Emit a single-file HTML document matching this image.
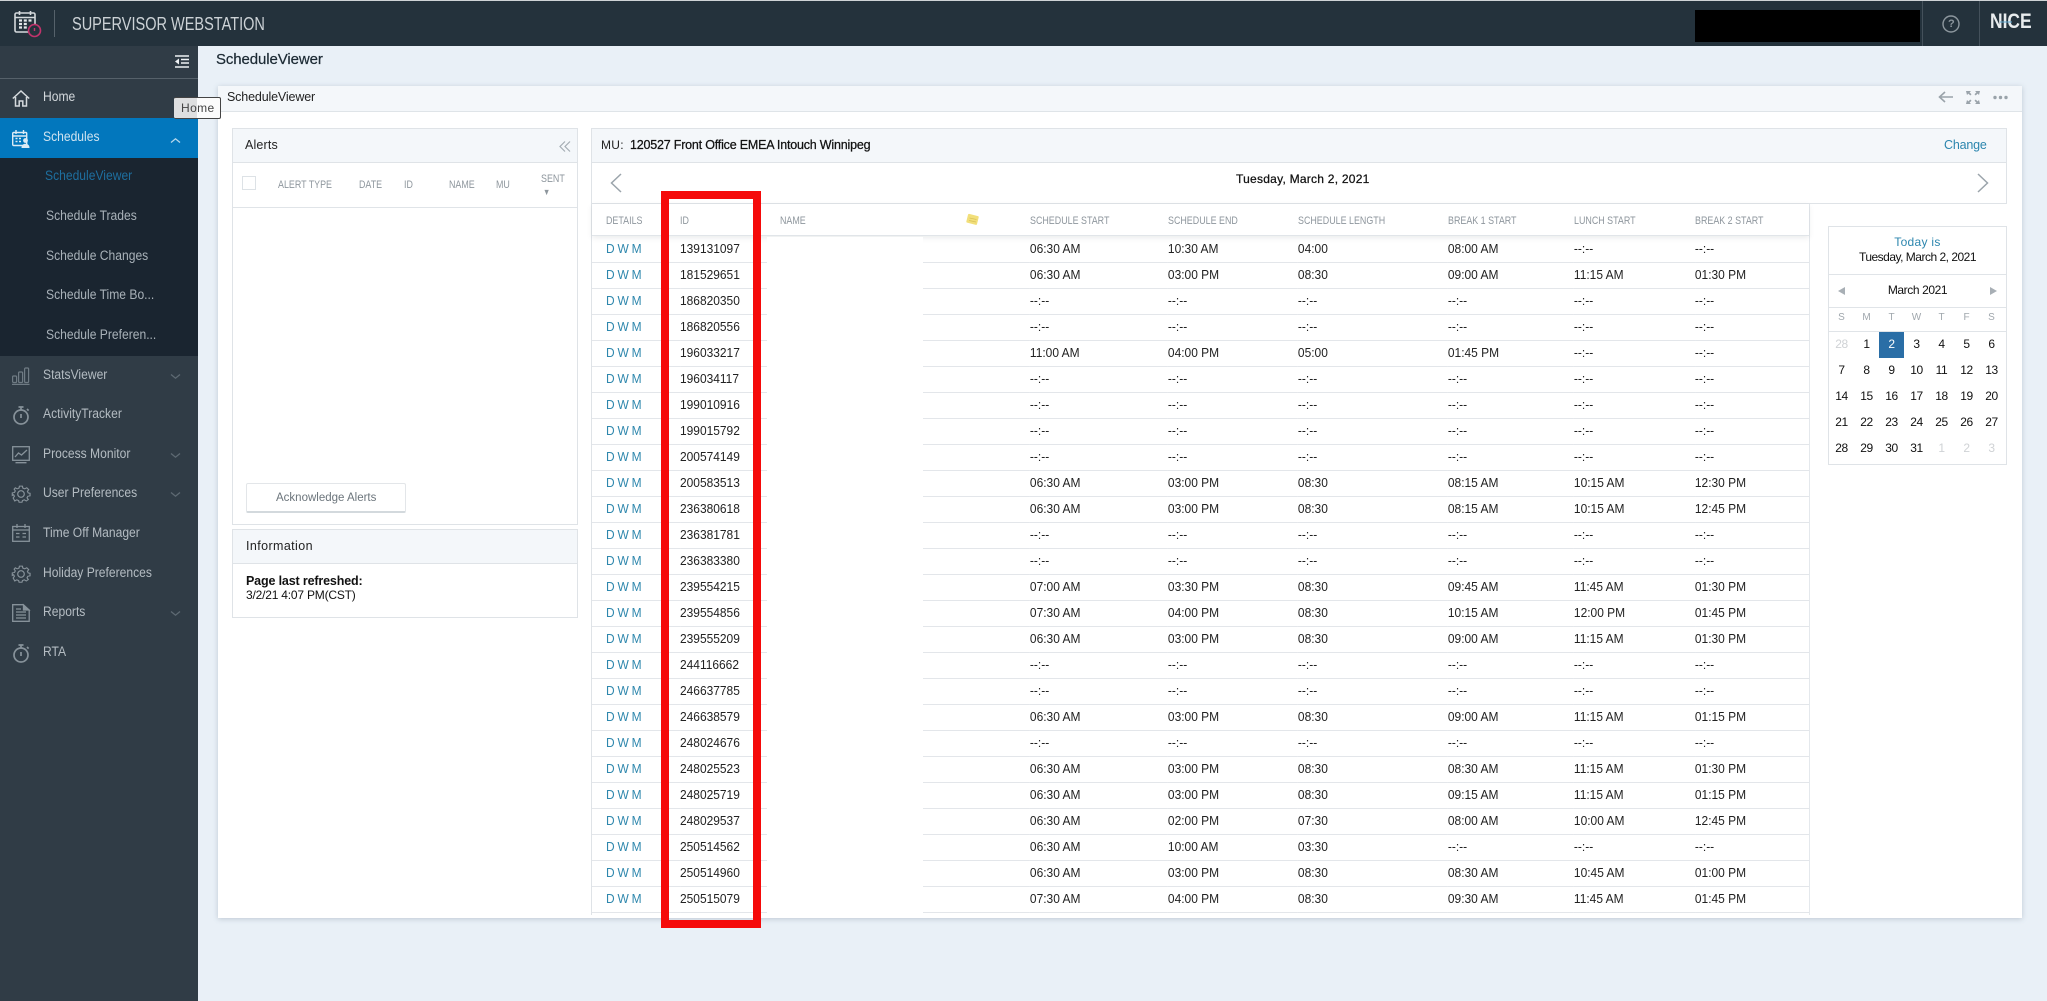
<!DOCTYPE html>
<html><head><meta charset="utf-8"><title>Supervisor Webstation</title>
<style>
html,body{margin:0;padding:0;width:2047px;height:1001px;overflow:hidden;background:#e9f0f7;font-family:"Liberation Sans",sans-serif;color:#1b1b1b}
*{box-sizing:border-box}
.a{position:absolute}
.t{position:absolute;white-space:nowrap;line-height:16px;transform:translateY(-8px)}
#top{left:0;top:1px;width:2047px;height:45px;background:#24323c}
#side{left:0;top:46px;width:198px;height:955px;background:#303c46}
.nav,.sub{font-size:13.5px;transform:translateY(-8px) scaleX(.896);transform-origin:0 50%}
.nav{color:#b4bcc2;left:43px}
.sub{color:#a9b2b9;left:46px}
.hd{font-size:11px;color:#8e969d;transform:translateY(-8px) scaleX(.81);transform-origin:0 50%}
svg{position:absolute;overflow:visible}
.ln{position:absolute;background:#e0e4e8}
table{border-collapse:collapse;table-layout:fixed;position:absolute;left:592px;top:236px;width:1322.8px;font-size:13px;transform:scaleX(.92);transform-origin:0 0}
td{height:26px;padding:0;border-bottom:1px solid #e3e6ea;white-space:nowrap;vertical-align:middle;line-height:14px;color:#222}
td:first-child{padding-left:15.2px;color:#2e87ad;word-spacing:-.5px}
.cal{position:absolute;width:25px;text-align:center;font-size:12px;line-height:16px;letter-spacing:-.4px;transform:translateY(-8px);color:#111}
.dw{color:#a0a7ad;font-size:10px;letter-spacing:0}
.ot{color:#cfd2d5}
</style></head><body>

<div class="a" id="top"></div>
<div class="a" style="left:0;top:0;width:2047px;height:1px;background:#cfd3d6"></div>
<svg style="left:14px;top:10px" width="28" height="28" viewBox="0 0 28 28" fill="none">
<rect x="1" y="3" width="20" height="19" rx="1.5" stroke="#d5dadd" stroke-width="1.6"/>
<path d="M1 7.5h20M5.5 1v4M16.5 1v4" stroke="#d5dadd" stroke-width="1.6"/>
<path d="M5 10.5h3M9.8 10.5h3M14.5 10.5h3M5 14h3M9.8 14h3M5 17.5h3M9.8 17.5h3" stroke="#e4e8ea" stroke-width="2.2"/>
<circle cx="20.5" cy="20.5" r="6" fill="#24323c" stroke="#c2336c" stroke-width="1.6"/>
<path d="M20.5 18v3" stroke="#c2336c" stroke-width="1.4"/>
</svg>
<div class="a" style="left:54px;top:10px;width:1px;height:27px;background:#56626b"></div>
<div class="t" style="left:72px;top:24px;font-size:18px;color:#ccd2d6;line-height:20px;transform:translateY(-10px) scaleX(.807);transform-origin:0 50%">SUPERVISOR WEBSTATION</div>
<div class="a" style="left:1695px;top:10px;width:225px;height:32px;background:#000"></div>
<div class="a" style="left:1922px;top:1px;width:1px;height:45px;background:#44515b"></div>
<div class="a" style="left:1979px;top:1px;width:1px;height:45px;background:#44515b"></div>
<svg style="left:1942px;top:15px" width="18" height="18" fill="none"><circle cx="9" cy="9" r="8" stroke="#8d979e" stroke-width="1.4"/></svg>
<div class="t" style="left:1948px;top:24px;font-size:11px;font-weight:bold;color:#8d979e">?</div>
<div class="t" style="left:1990px;top:22px;font-size:21px;font-weight:bold;color:#e8ecee;line-height:20px;transform:translateY(-10px) scaleX(.83);transform-origin:0 50%">NICE</div>
<svg style="left:2000px;top:17px" width="12" height="10" fill="none" stroke="#5da6cf" stroke-width="1"><path d="M0 5h12"/></svg>

<div class="a" id="side"></div>
<div class="a" style="left:0;top:78px;width:198px;height:1px;background:#56616a"></div>
<svg style="left:175px;top:55px" width="15" height="13" fill="none" stroke="#eef1f3" stroke-width="1.6"><path d="M0 1h14M6 4.5h8M6 8h8M0 12h14"/><path d="M4 3.5v6L0 6.5z" fill="#eef1f3" stroke="none"/></svg>

<div class="a" style="left:0;top:118px;width:198px;height:40px;background:#0277bd"></div>
<div class="a" style="left:0;top:158px;width:198px;height:198px;background:#1a2530"></div>

<svg style="left:12px;top:90px" width="18" height="17" fill="none" stroke="#d5dadd" stroke-width="1.5"><path d="M.8 8.5 9 1l8.2 7.5M3.5 7v9h3.7v-5h3.6v5h3.7V7"/></svg>
<div class="t nav" style="top:97px;color:#d3d8dc">Home</div>
<svg style="left:12px;top:130px" width="19" height="18" fill="none" stroke="#dcebf5" stroke-width="1.4"><rect x=".7" y="2.5" width="14" height="13" rx="1"/><path d="M.7 6h14M4 0v4M11.5 0v4"/><path d="M3.5 8.5h2M7 8.5h2M3.5 11.5h2M7 11.5h2" stroke-width="1.6"/><circle cx="13.5" cy="10.5" r="2.4" fill="#dcebf5" stroke="none"/><path d="M9.5 18c0-3 2-4.2 4-4.2s4 1.2 4 4.2z" fill="#dcebf5" stroke="none"/></svg>
<div class="t nav" style="top:137px;color:#cfe3f0">Schedules</div>
<svg style="left:171px;top:138px" width="9" height="5" fill="none" stroke="#b8d8ec" stroke-width="1.3"><path d="M0 4.5L4.5 .8 9 4.5"/></svg>

<div class="t sub" style="left:45px;top:176px;color:#1e6f9f">ScheduleViewer</div>
<div class="t sub" style="top:216px">Schedule Trades</div>
<div class="t sub" style="top:256px">Schedule Changes</div>
<div class="t sub" style="top:295px">Schedule Time Bo...</div>
<div class="t sub" style="top:335px">Schedule Preferen...</div>

<svg style="left:12px;top:367px" width="18" height="18" fill="none" stroke="#6f7b84" stroke-width="1.2"><rect x=".6" y="9" width="4" height="6.5" rx="1"/><rect x="6.6" y="5" width="4" height="10.5" rx="1"/><rect x="12.6" y="1" width="4" height="14.5" rx="1"/><path d="M0 17.4h17.5"/></svg>
<div class="t nav" style="top:375px">StatsViewer</div>
<svg style="left:13px;top:406px" width="17" height="19" fill="none" stroke="#87929a" stroke-width="1.7"><circle cx="8" cy="11" r="7"/><path d="M5.5 1h5M8 1v3M14 3l1.6 1.6M8 8v4" /></svg>
<div class="t nav" style="top:414px">ActivityTracker</div>
<svg style="left:12px;top:446px" width="18" height="18" fill="none" stroke="#87929a" stroke-width="1.3"><rect x=".7" y=".7" width="16.6" height="13.6"/><path d="M3 11l3.5-4 3 2L15 4M3.5 16.7h11" /></svg>
<div class="t nav" style="top:454px">Process Monitor</div>
<svg style="left:12px;top:485px" width="18" height="18" viewBox="0 0 18 18" fill="none" stroke="#87929a" stroke-width="1.2"><circle cx="9" cy="9" r="3.3"/><path d="M7.5 1h3l.5 2.4 1.9.8L15 3l2 2.1-1.3 2 .8 1.9 1.9.5v3l-2.3.5-.8 1.8 1.3 2-2.1 1.7-2-1.3-1.9.8-.5 2h-3l-.5-2-1.9-.8-2 1.3L1 15l1.3-2-.8-1.8L.1 12V9l2.3-.5.8-1.9L2 4.6 3.2 3l1.9 1.2L7 3.4z" transform="scale(.97 .85) translate(.2 .3)"/></svg>
<div class="t nav" style="top:493px">User Preferences</div>
<svg style="left:12px;top:524px" width="18" height="18" fill="none" stroke="#87929a" stroke-width="1.3"><rect x=".7" y="2.5" width="16.6" height="14.8"/><path d="M.7 6h16.6M5 0v4M13 0v4M4 9.5h3.5M10.5 9.5h3.5M4 13h3.5M10.5 13h3.5"/></svg>
<div class="t nav" style="top:533px">Time Off Manager</div>
<svg style="left:12px;top:565px" width="18" height="18" viewBox="0 0 18 18" fill="none" stroke="#87929a" stroke-width="1.2"><circle cx="9" cy="9" r="3.3"/><path d="M7.5 1h3l.5 2.4 1.9.8L15 3l2 2.1-1.3 2 .8 1.9 1.9.5v3l-2.3.5-.8 1.8 1.3 2-2.1 1.7-2-1.3-1.9.8-.5 2h-3l-.5-2-1.9-.8-2 1.3L1 15l1.3-2-.8-1.8L.1 12V9l2.3-.5.8-1.9L2 4.6 3.2 3l1.9 1.2L7 3.4z" transform="scale(.97 .85) translate(.2 .3)"/></svg>
<div class="t nav" style="top:573px">Holiday Preferences</div>
<svg style="left:12px;top:604px" width="18" height="18" fill="none" stroke="#87929a" stroke-width="1.3"><path d="M.7.7h10.5l6 5.5v11.1H.7z"/><path d="M4 8h10M4 11h10M4 14h10M4 5h5" /><path d="M11.5 1v5h5.5z" fill="#87929a"/></svg>
<div class="t nav" style="top:612px">Reports</div>
<svg style="left:13px;top:644px" width="17" height="19" fill="none" stroke="#87929a" stroke-width="1.7"><circle cx="8" cy="11" r="7"/><path d="M5.5 1h5M8 1v3M14 3l1.6 1.6M8 8v4" /></svg>
<div class="t nav" style="top:652px">RTA</div>
<svg style="left:171px;top:374px" width="9" height="5" fill="none" stroke="#5e6a73" stroke-width="1.3"><path d="M0 .5L4.5 4.2 9 .5"/></svg>
<svg style="left:171px;top:453px" width="9" height="5" fill="none" stroke="#5e6a73" stroke-width="1.3"><path d="M0 .5L4.5 4.2 9 .5"/></svg>
<svg style="left:171px;top:492px" width="9" height="5" fill="none" stroke="#5e6a73" stroke-width="1.3"><path d="M0 .5L4.5 4.2 9 .5"/></svg>
<svg style="left:171px;top:611px" width="9" height="5" fill="none" stroke="#5e6a73" stroke-width="1.3"><path d="M0 .5L4.5 4.2 9 .5"/></svg>

<div class="t" style="left:216px;top:60px;font-size:15px;letter-spacing:-.1px;color:#1c2a34;-webkit-text-stroke:.2px #1c2a34">ScheduleViewer</div>

<!-- main panel -->
<div class="a" style="left:218px;top:86px;width:1804px;height:832px;background:#fff;box-shadow:0 1px 5px rgba(90,110,130,.3)"></div>
<div class="a" style="left:218px;top:86px;width:1804px;height:26px;background:#f4f7fa;border-bottom:1px solid #dfe4e8"></div>
<div class="t" style="left:227px;top:97px;font-size:12.5px;letter-spacing:-.15px;color:#222">ScheduleViewer</div>
<svg style="left:1938px;top:91px" width="16" height="12" fill="none" stroke="#9aa3aa" stroke-width="1.6"><path d="M15 6H2M7 1L1.5 6 7 11"/></svg>
<svg style="left:1966px;top:91px" width="14" height="13" fill="#9aa3aa"><path d="M0 0h5L3.6 1.4 5.5 3.3 4.3 4.5 2.4 2.6 1 4zM14 0H9l1.4 1.4-1.9 1.9 1.2 1.2 1.9-1.9L13 4zM0 13H5L3.6 11.6 5.5 9.7 4.3 8.5 2.4 10.4 1 9zM14 13H9l1.4-1.4-1.9-1.9 1.2-1.2 1.9 1.9L13 9z"/></svg>
<svg style="left:1993px;top:95px" width="15" height="5" fill="#9aa3aa"><circle cx="2" cy="2.5" r="1.7"/><circle cx="7.5" cy="2.5" r="1.7"/><circle cx="13" cy="2.5" r="1.7"/></svg>

<!-- Home tooltip -->
<div class="a" style="left:174px;top:97px;width:47px;height:22px;border:1px solid #444;border-left:0;border-radius:2px;background:linear-gradient(90deg,#dedfe0 0,#dedfe0 23px,#fbfbfb 23px)"></div>
<div class="t" style="left:181px;top:108px;font-size:12px;letter-spacing:.4px;color:#444">Home</div>

<!-- Alerts -->
<div class="a" style="left:232px;top:128px;width:346px;height:397px;border:1px solid #dfe3e7"></div>
<div class="a" style="left:233px;top:129px;width:344px;height:34px;background:#f4f7fa;border-bottom:1px solid #dfe3e7"></div>
<div class="t" style="left:245px;top:145px;font-size:12.5px;letter-spacing:.15px;color:#222">Alerts</div>
<svg style="left:559px;top:141px" width="12" height="11" fill="none" stroke="#a4adb4" stroke-width="1.2"><path d="M6 .5L1 5.5l5 5M11 .5L6 5.5l5 5"/></svg>
<div class="ln" style="left:233px;top:207px;width:344px;height:1px"></div>
<div class="a" style="left:242px;top:176px;width:14px;height:14px;border:1px solid #dde2e6"></div>
<div class="t hd" style="left:278px;top:185px">ALERT TYPE</div>
<div class="t hd" style="left:359px;top:185px">DATE</div>
<div class="t hd" style="left:404px;top:185px">ID</div>
<div class="t hd" style="left:449px;top:185px">NAME</div>
<div class="t hd" style="left:496px;top:185px">MU</div>
<div class="t hd" style="left:541px;top:179px">SENT</div>
<div class="t hd" style="left:543px;top:192px;font-size:9px">▼</div>
<div class="a" style="left:246px;top:483px;width:160px;height:30px;background:#fff;border:1px solid #e3e6e9;border-bottom:2px solid #d3d9dd;border-radius:2px"></div>
<div class="t" style="left:276px;top:498px;font-size:11.5px;color:#6c757c">Acknowledge Alerts</div>

<!-- Information -->
<div class="a" style="left:232px;top:529px;width:346px;height:89px;border:1px solid #dfe3e7"></div>
<div class="a" style="left:233px;top:530px;width:344px;height:34px;background:#f4f7fa;border-bottom:1px solid #dfe3e7"></div>
<div class="t" style="left:246px;top:546px;font-size:12.5px;letter-spacing:.4px;color:#222">Information</div>
<div class="t" style="left:246px;top:581px;font-size:12.5px;font-weight:bold;color:#111;letter-spacing:-.15px">Page last refreshed:</div>
<div class="t" style="left:246px;top:595px;font-size:12px;letter-spacing:-.2px;color:#111">3/2/21 4:07 PM(CST)</div>

<!-- MU panel -->
<div class="a" style="left:591px;top:128px;width:1416px;height:76px;border:1px solid #dfe3e7"></div>
<div class="a" style="left:592px;top:129px;width:1414px;height:34px;background:#f4f7fa;border-bottom:1px solid #dfe3e7"></div>
<div class="t" style="left:601px;top:145px;font-size:12px;letter-spacing:.3px;color:#222">MU:</div>
<div class="t" style="left:630px;top:145px;font-size:12.5px;letter-spacing:-.2px;color:#111;-webkit-text-stroke:.25px #111">120527 Front Office EMEA Intouch Winnipeg</div>
<div class="t" style="left:1944px;top:145px;font-size:12.5px;letter-spacing:-.2px;color:#2c86ae">Change</div>
<svg style="left:610px;top:173px" width="12" height="20" fill="none" stroke="#9ba4ab" stroke-width="1.5"><path d="M11 1L1.5 10 11 19"/></svg>
<svg style="left:1977px;top:173px" width="12" height="20" fill="none" stroke="#9ba4ab" stroke-width="1.5"><path d="M1 1l9.5 9L1 19"/></svg>
<div class="t" style="left:1236px;top:179px;font-size:12px;letter-spacing:.25px;color:#111;-webkit-text-stroke:.25px #111">Tuesday, March 2, 2021</div>

<!-- table -->
<div class="a" style="left:591px;top:204px;width:1px;height:711px;background:#dfe3e7"></div>
<div class="a" style="left:1809px;top:204px;width:1px;height:711px;background:#e4e8ec"></div>
<div class="a" style="left:592px;top:204px;width:1217px;height:32px;background:#fff;border-bottom:1px solid #e1e5e9;box-shadow:0 2px 5px rgba(90,100,110,.12)"></div>
<div class="t hd" style="left:606px;top:221px">DETAILS</div>
<div class="t hd" style="left:680px;top:221px">ID</div>
<div class="t hd" style="left:780px;top:221px">NAME</div>
<svg style="left:966px;top:213px" width="14" height="13"><rect x="1" y="2" width="11" height="9" rx="1" fill="#f2df7a" transform="rotate(14 7 6.5)"/><path d="M3.5 5l7 1.5M3 7.5l7 1.5" stroke="#d8c25a" stroke-width=".8"/></svg>
<div class="t hd" style="left:1030px;top:221px">SCHEDULE START</div>
<div class="t hd" style="left:1168px;top:221px">SCHEDULE END</div>
<div class="t hd" style="left:1298px;top:221px">SCHEDULE LENGTH</div>
<div class="t hd" style="left:1448px;top:221px">BREAK 1 START</div>
<div class="t hd" style="left:1574px;top:221px">LUNCH START</div>
<div class="t hd" style="left:1695px;top:221px">BREAK 2 START</div>

<table>
<colgroup><col style="width:95.65px"><col style="width:108.7px"><col style="width:271.7px"><col style="width:150px"><col style="width:141.3px"><col style="width:163px"><col style="width:137px"><col style="width:131.5px"><col style="width:123.95px"></colgroup>
<tr><td>D W M</td><td>139131097</td><td></td><td>06:30 AM</td><td>10:30 AM</td><td>04:00</td><td>08:00 AM</td><td>--:--</td><td>--:--</td></tr>
<tr><td>D W M</td><td>181529651</td><td></td><td>06:30 AM</td><td>03:00 PM</td><td>08:30</td><td>09:00 AM</td><td>11:15 AM</td><td>01:30 PM</td></tr>
<tr><td>D W M</td><td>186820350</td><td></td><td>--:--</td><td>--:--</td><td>--:--</td><td>--:--</td><td>--:--</td><td>--:--</td></tr>
<tr><td>D W M</td><td>186820556</td><td></td><td>--:--</td><td>--:--</td><td>--:--</td><td>--:--</td><td>--:--</td><td>--:--</td></tr>
<tr><td>D W M</td><td>196033217</td><td></td><td>11:00 AM</td><td>04:00 PM</td><td>05:00</td><td>01:45 PM</td><td>--:--</td><td>--:--</td></tr>
<tr><td>D W M</td><td>196034117</td><td></td><td>--:--</td><td>--:--</td><td>--:--</td><td>--:--</td><td>--:--</td><td>--:--</td></tr>
<tr><td>D W M</td><td>199010916</td><td></td><td>--:--</td><td>--:--</td><td>--:--</td><td>--:--</td><td>--:--</td><td>--:--</td></tr>
<tr><td>D W M</td><td>199015792</td><td></td><td>--:--</td><td>--:--</td><td>--:--</td><td>--:--</td><td>--:--</td><td>--:--</td></tr>
<tr><td>D W M</td><td>200574149</td><td></td><td>--:--</td><td>--:--</td><td>--:--</td><td>--:--</td><td>--:--</td><td>--:--</td></tr>
<tr><td>D W M</td><td>200583513</td><td></td><td>06:30 AM</td><td>03:00 PM</td><td>08:30</td><td>08:15 AM</td><td>10:15 AM</td><td>12:30 PM</td></tr>
<tr><td>D W M</td><td>236380618</td><td></td><td>06:30 AM</td><td>03:00 PM</td><td>08:30</td><td>08:15 AM</td><td>10:15 AM</td><td>12:45 PM</td></tr>
<tr><td>D W M</td><td>236381781</td><td></td><td>--:--</td><td>--:--</td><td>--:--</td><td>--:--</td><td>--:--</td><td>--:--</td></tr>
<tr><td>D W M</td><td>236383380</td><td></td><td>--:--</td><td>--:--</td><td>--:--</td><td>--:--</td><td>--:--</td><td>--:--</td></tr>
<tr><td>D W M</td><td>239554215</td><td></td><td>07:00 AM</td><td>03:30 PM</td><td>08:30</td><td>09:45 AM</td><td>11:45 AM</td><td>01:30 PM</td></tr>
<tr><td>D W M</td><td>239554856</td><td></td><td>07:30 AM</td><td>04:00 PM</td><td>08:30</td><td>10:15 AM</td><td>12:00 PM</td><td>01:45 PM</td></tr>
<tr><td>D W M</td><td>239555209</td><td></td><td>06:30 AM</td><td>03:00 PM</td><td>08:30</td><td>09:00 AM</td><td>11:15 AM</td><td>01:30 PM</td></tr>
<tr><td>D W M</td><td>244116662</td><td></td><td>--:--</td><td>--:--</td><td>--:--</td><td>--:--</td><td>--:--</td><td>--:--</td></tr>
<tr><td>D W M</td><td>246637785</td><td></td><td>--:--</td><td>--:--</td><td>--:--</td><td>--:--</td><td>--:--</td><td>--:--</td></tr>
<tr><td>D W M</td><td>246638579</td><td></td><td>06:30 AM</td><td>03:00 PM</td><td>08:30</td><td>09:00 AM</td><td>11:15 AM</td><td>01:15 PM</td></tr>
<tr><td>D W M</td><td>248024676</td><td></td><td>--:--</td><td>--:--</td><td>--:--</td><td>--:--</td><td>--:--</td><td>--:--</td></tr>
<tr><td>D W M</td><td>248025523</td><td></td><td>06:30 AM</td><td>03:00 PM</td><td>08:30</td><td>08:30 AM</td><td>11:15 AM</td><td>01:30 PM</td></tr>
<tr><td>D W M</td><td>248025719</td><td></td><td>06:30 AM</td><td>03:00 PM</td><td>08:30</td><td>09:15 AM</td><td>11:15 AM</td><td>01:15 PM</td></tr>
<tr><td>D W M</td><td>248029537</td><td></td><td>06:30 AM</td><td>02:00 PM</td><td>07:30</td><td>08:00 AM</td><td>10:00 AM</td><td>12:45 PM</td></tr>
<tr><td>D W M</td><td>250514562</td><td></td><td>06:30 AM</td><td>10:00 AM</td><td>03:30</td><td>--:--</td><td>--:--</td><td>--:--</td></tr>
<tr><td>D W M</td><td>250514960</td><td></td><td>06:30 AM</td><td>03:00 PM</td><td>08:30</td><td>08:30 AM</td><td>10:45 AM</td><td>01:00 PM</td></tr>
<tr><td>D W M</td><td>250515079</td><td></td><td>07:30 AM</td><td>04:00 PM</td><td>08:30</td><td>09:30 AM</td><td>11:45 AM</td><td>01:45 PM</td></tr>
</table>
<div class="a" style="left:767px;top:237px;width:156px;height:681px;background:#fff"></div>

<!-- red box -->
<div class="a" style="left:661px;top:191px;width:100px;height:737px;border:8px solid #f50a0a"></div>

<!-- calendar -->
<div class="a" style="left:1828px;top:226px;width:179px;height:239px;border:1px solid #dfe3e7;background:#fff"></div>
<div class="ln" style="left:1829px;top:274px;width:177px;height:1px"></div>
<div class="ln" style="left:1829px;top:307px;width:177px;height:1px"></div>
<div class="ln" style="left:1829px;top:331px;width:177px;height:1px"></div>
<div class="t" style="left:1829px;width:177px;text-align:center;top:242px;font-size:12px;letter-spacing:.3px;color:#2c86ae">Today is</div>
<div class="t" style="left:1829px;width:177px;text-align:center;top:257px;font-size:12px;letter-spacing:-.5px;color:#111">Tuesday, March 2, 2021</div>
<div class="t" style="left:1829px;width:177px;text-align:center;top:290px;font-size:12px;letter-spacing:-.4px;color:#111">March 2021</div>
<svg style="left:1838px;top:287px" width="7" height="8" fill="#a8afb5"><path d="M7 0v8L0 4z"/></svg>
<svg style="left:1990px;top:287px" width="7" height="8" fill="#a8afb5"><path d="M0 0v8l7-4z"/></svg>
<div class="a" style="left:1879px;top:332px;width:25px;height:26px;background:#2a6ea6"></div>

<div class="cal dw" style="left:1829px;top:318px">S</div><div class="cal dw" style="left:1854px;top:318px">M</div><div class="cal dw" style="left:1879px;top:318px">T</div><div class="cal dw" style="left:1904px;top:318px">W</div><div class="cal dw" style="left:1929px;top:318px">T</div><div class="cal dw" style="left:1954px;top:318px">F</div><div class="cal dw" style="left:1979px;top:318px">S</div>

<div class="cal ot" style="left:1829px;top:344px">28</div><div class="cal" style="left:1854px;top:344px">1</div><div class="cal" style="left:1879px;top:344px;color:#fff">2</div><div class="cal" style="left:1904px;top:344px">3</div><div class="cal" style="left:1929px;top:344px">4</div><div class="cal" style="left:1954px;top:344px">5</div><div class="cal" style="left:1979px;top:344px">6</div>
<div class="cal" style="left:1829px;top:370px">7</div><div class="cal" style="left:1854px;top:370px">8</div><div class="cal" style="left:1879px;top:370px">9</div><div class="cal" style="left:1904px;top:370px">10</div><div class="cal" style="left:1929px;top:370px">11</div><div class="cal" style="left:1954px;top:370px">12</div><div class="cal" style="left:1979px;top:370px">13</div>
<div class="cal" style="left:1829px;top:396px">14</div><div class="cal" style="left:1854px;top:396px">15</div><div class="cal" style="left:1879px;top:396px">16</div><div class="cal" style="left:1904px;top:396px">17</div><div class="cal" style="left:1929px;top:396px">18</div><div class="cal" style="left:1954px;top:396px">19</div><div class="cal" style="left:1979px;top:396px">20</div>
<div class="cal" style="left:1829px;top:422px">21</div><div class="cal" style="left:1854px;top:422px">22</div><div class="cal" style="left:1879px;top:422px">23</div><div class="cal" style="left:1904px;top:422px">24</div><div class="cal" style="left:1929px;top:422px">25</div><div class="cal" style="left:1954px;top:422px">26</div><div class="cal" style="left:1979px;top:422px">27</div>
<div class="cal" style="left:1829px;top:448px">28</div><div class="cal" style="left:1854px;top:448px">29</div><div class="cal" style="left:1879px;top:448px">30</div><div class="cal" style="left:1904px;top:448px">31</div><div class="cal ot" style="left:1929px;top:448px">1</div><div class="cal ot" style="left:1954px;top:448px">2</div><div class="cal ot" style="left:1979px;top:448px">3</div>

</body></html>
